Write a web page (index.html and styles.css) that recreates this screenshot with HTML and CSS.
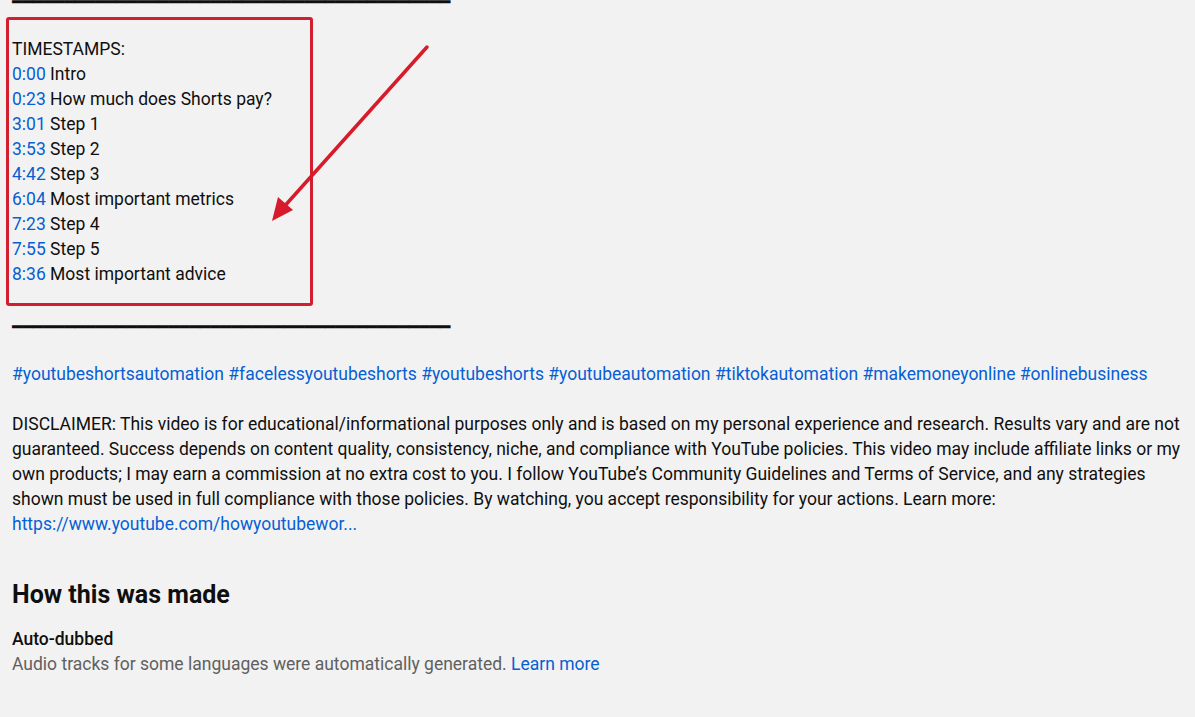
FILE: index.html
```html
<!DOCTYPE html>
<html>
<head>
<meta charset="utf-8">
<link rel="stylesheet" href="styles.css">
</head>
<body>
<div class="page">
  <div class="desc">
    <div class="line rule">━━━━━━━━━━━━━━━━━━━━━━━━━━━━━━━━━━━━━━━━━━</div>
    <div class="line blank">&nbsp;</div>
    <div class="line">TIMESTAMPS:</div>
    <div class="line"><a class="link">0:00</a> Intro</div>
    <div class="line"><a class="link">0:23</a> How much does Shorts pay?</div>
    <div class="line"><a class="link">3:01</a> Step 1</div>
    <div class="line"><a class="link">3:53</a> Step 2</div>
    <div class="line"><a class="link">4:42</a> Step 3</div>
    <div class="line"><a class="link">6:04</a> Most important metrics</div>
    <div class="line"><a class="link">7:23</a> Step 4</div>
    <div class="line"><a class="link">7:55</a> Step 5</div>
    <div class="line"><a class="link">8:36</a> Most important advice</div>
    <div class="line blank">&nbsp;</div>
    <div class="line rule">━━━━━━━━━━━━━━━━━━━━━━━━━━━━━━━━━━━━━━━━━━</div>
    <div class="line blank">&nbsp;</div>
    <div class="line"><a class="link">#youtubeshortsautomation</a> <a class="link">#facelessyoutubeshorts</a> <a class="link">#youtubeshorts</a> <a class="link">#youtubeautomation</a> <a class="link">#tiktokautomation</a> <a class="link">#makemoneyonline</a> <a class="link">#onlinebusiness</a></div>
    <div class="line blank">&nbsp;</div>
    <p class="para">DISCLAIMER: This video is for educational/informational purposes only and is based on my personal experience and research. Results vary and are not guaranteed. Success depends on content quality, consistency, niche, and compliance with YouTube policies. This video may include affiliate links or my own products; I may earn a commission at no extra cost to you. I follow YouTube’s Community Guidelines and Terms of Service, and any strategies shown must be used in full compliance with those policies. By watching, you accept responsibility for your actions. Learn more: <a class="link">https://www.youtube.com/howyoutubewor...</a></p>
  </div>
  <section class="made">
    <h2 class="made-title">How this was made</h2>
    <div class="made-item">Auto-dubbed</div>
    <div class="made-sub">Audio tracks for some languages were automatically generated. <a class="link">Learn more</a></div>
  </section>

  <div class="callout"></div>
  <svg class="arrow" width="200" height="220" viewBox="0 0 200 220">
    <line x1="167" y1="17" x2="22" y2="179" stroke="#d71b2a" stroke-width="3.5" stroke-linecap="round"/>
    <polygon points="12,191 18,167 33,180" fill="#d71b2a"/>
  </svg>
</div>
</body>
</html>
```
FILE: styles.css
```css
html, body {
  margin: 0;
  padding: 0;
  background: #f2f2f2;
}
body {
  font-family: Roboto, "Liberation Sans", Arial, sans-serif;
  color: #0f0f0f;
  font-size: 17.5px;
  line-height: 25px;
  overflow: hidden;
}
.page {
  position: relative;
  padding: 0 12px;
  margin-top: -13.5px;
  width: 1172px;
}
.line {
  height: 25px;
  white-space: nowrap;
}
.rule {
  font-family: "DejaVu Sans", sans-serif;
  letter-spacing: -0.1px;
  padding-top: 3px;
  height: 22px;
}
.link {
  color: #065fd4;
  text-decoration: none;
}
.para {
  margin: 0;
}
.made {
  margin-top: 40px;
}
.made-title {
  margin: 0;
  font-size: 25px;
  line-height: 35px;
  font-weight: 700;
}
.made-item {
  margin-top: 15px;
  font-weight: 500;
}
.made-sub {
  color: #606060;
}
.callout {
  position: absolute;
  left: 6px;
  top: 30.5px;
  width: 301px;
  height: 283px;
  border: 3px solid #d21f30;
  border-radius: 3px;
}
.arrow {
  position: absolute;
  left: 260px;
  top: 43.5px;
}
```
